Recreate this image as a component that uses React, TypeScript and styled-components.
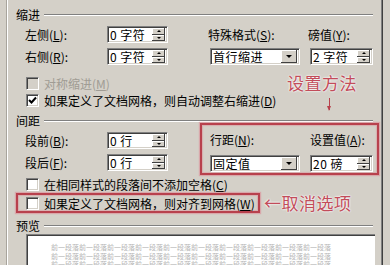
import React from 'react';
import styled, { createGlobalStyle } from 'styled-components';

const Global = createGlobalStyle`
html, body {
  margin: 0;
  padding: 0;
  background: #d4d0c8;
}
body {
  font-family: 'Noto Sans CJK SC', 'DejaVu Sans', sans-serif;
  font-size: 12px;
  color: #000;
}
`

const Page = styled.div`
width: 390px;
height: 265px;
background: #d4d0c8;
overflow: hidden;
position: relative;
`

const Pane = styled.div`
margin-left: 7px;
height: 265px;
border-left: 1px solid #ffffff;
border-right: 1px solid #808080;
box-shadow: -1px 0 0 #a8a49c, 1px 0 0 #404040;
padding: 0 8px;
box-sizing: content-box;
display: flex;
flex-direction: column;
width: 357px;
`

const GroupHead = styled.div<{ $top: number }>`
display: flex;
align-items: center;
height: 13px;
margin-top: ${p => p.$top}px;
line-height: 13px;
span {
  padding-right: 4px;
}
&::after {
  content: '';
  flex: 1;
  height: 0;
  border-top: 1px solid #808080;
  border-bottom: 1px solid #ffffff;
}
`

const IndentGrid = styled.div`
display: grid;
grid-template-columns: 82px 61px 42px 90px 10px 63px;
grid-template-rows: 17px 17px;
row-gap: 5px;
margin-top: 5px;
padding-left: 9px;
align-items: center;
`

const Label = styled.div`
white-space: nowrap;
line-height: 14px;
`

const RightLabel = styled(Label)<{ $col: number }>`
grid-column: ${p => p.$col} / span 2;
margin-left: -2px;
`

const Sunken = styled.div<{ $w: number }>`
width: ${p => p.$w}px;
height: 17px;
box-sizing: border-box;
background: #fff;
border-top: 1px solid #808080;
border-left: 1px solid #808080;
border-bottom: 1px solid #ffffff;
border-right: 1px solid #ffffff;
box-shadow: inset 1px 1px 0 #404040, inset -1px -1px 0 #d4d0c8;
display: flex;
align-items: center;
padding: 2px;
`

const FieldText = styled.div`
flex: 1;
line-height: 13px;
white-space: nowrap;
letter-spacing: 0.5px;
`

const SpinCol = styled.div`
display: flex;
flex-direction: column;
width: 13px;
height: 13px;
`

const RaisedBtn = styled.div`
flex: 1;
background: #d4d0c8;
box-shadow: inset -1px -1px 0 #404040, inset 1px 1px 0 #ffffff;
display: flex;
align-items: center;
justify-content: center;
`

const Tri = styled.div<{ $up?: boolean; $size?: number }>`
width: 0;
height: 0;
border-left: ${p => p.$size || 2}px solid transparent;
border-right: ${p => p.$size || 2}px solid transparent;
${p => p.$up
    ? `border-bottom: ${p.$size || 2}px solid #000;`
    : `border-top: ${p.$size || 2}px solid #000;`}
`

const DropBtn = styled(RaisedBtn)`
flex: none;
width: 16px;
height: 13px;
`

const CheckRow = styled.div<{ $top: number; $disabled?: boolean }>`
display: flex;
align-items: center;
height: 13px;
margin-top: ${p => p.$top}px;
padding-left: 10px;
gap: 5px;
white-space: nowrap;
color: ${p => p.$disabled ? '#a09c94' : '#000'};
`

const Box = styled.div<{ $disabled?: boolean }>`
width: 13px;
height: 13px;
box-sizing: border-box;
background: ${p => p.$disabled ? '#d4d0c8' : '#fff'};
border-top: 1px solid #808080;
border-left: 1px solid #808080;
border-bottom: 1px solid #ffffff;
border-right: 1px solid #ffffff;
box-shadow: inset 1px 1px 0 #404040, inset -1px -1px 0 #d4d0c8;
display: flex;
align-items: center;
justify-content: center;
flex: none;
`

const SpacingRow = styled.div`
display: flex;
`

const SpacingLeft = styled.div`
display: grid;
grid-template-columns: 82px 61px;
grid-template-rows: 15px 15px;
row-gap: 7px;
margin-top: 6px;
padding-left: 9px;
align-items: center;
width: 175px;
`

const RedBox = styled.div`
margin-top: -4px;
margin-right: -6px;
width: 179px;
height: 52px;
box-sizing: border-box;
border: 2px solid #b8414d;
box-shadow: 0 0 1px 1px rgba(220, 140, 150, 0.6), inset 0 0 1px 1px rgba(220, 140, 150, 0.5);
display: grid;
grid-template-columns: 90px 10px 63px;
grid-template-rows: 14px 17px;
row-gap: 8px;
padding: 8px 0 0 8px;
`

const AnnotRow = styled.div`
display: flex;
align-items: center;
margin-top: 2px;
`

const RedBox2 = styled.div`
width: 244px;
height: 20px;
box-sizing: border-box;
border: 2px solid #b8414d;
box-shadow: 0 0 1px 1px rgba(220, 140, 150, 0.6), inset 0 0 1px 1px rgba(220, 140, 150, 0.5);
display: flex;
align-items: center;
padding-left: 8px;
gap: 5px;
white-space: nowrap;
`

const Note = styled.div`
color: #c24c5a;
font-size: 17px;
line-height: 18px;
white-space: nowrap;
letter-spacing: 0.5px;
text-shadow: 0 0 2px #fff, 0 0 2px #fff;
`

const SideNote = styled(Note)`
margin-left: 4px;
`

const TopNote = styled.div`
position: absolute;
left: 287px;
top: 74px;
display: flex;
flex-direction: column;
align-items: center;
`

const DownArrow = styled.div`
margin-top: 6px;
margin-left: 14px;
width: 1px;
height: 12px;
background: #b8414d;
position: relative;
&::after {
  content: '';
  position: absolute;
  left: -2px;
  bottom: -1px;
  border-left: 2.5px solid transparent;
  border-right: 2.5px solid transparent;
  border-top: 5px solid #b8414d;
}
`

const Preview = styled.div`
margin-top: 2px;
margin-left: 10px;
width: 349px;
flex: 1;
background: #fff;
border-top: 1px solid #808080;
border-left: 1px solid #808080;
box-shadow: inset 1px 1px 0 #404040;
padding: 8px 0 0 24px;
box-sizing: border-box;
overflow: hidden;
`

const PreviewLine = styled.div`
font-size: 7px;
line-height: 8.5px;
color: #b4b4b4;
white-space: nowrap;
`

const Key = ({ k }: { k: string }) => (
    <span>(<u>{k}</u>)</span>
)

const Spin = ({ w, value }: { w: number; value: string }) => (
    <Sunken $w={w}>
        <FieldText>{value}</FieldText>
        <SpinCol>
            <RaisedBtn><Tri $up /></RaisedBtn>
            <RaisedBtn><Tri /></RaisedBtn>
        </SpinCol>
    </Sunken>
)

const Drop = ({ value }: { value: string }) => (
    <Sunken $w={90}>
        <FieldText>{value}</FieldText>
        <DropBtn><Tri $size={3} /></DropBtn>
    </Sunken>
)

const Check = () => (
    <svg width="9" height="9" viewBox="0 0 9 9">
        <path d="M1 4 L3.5 6.5 L8 1.5" stroke="#000" strokeWidth="2" fill="none" />
    </svg>
)

const prevText = '前一段落'.repeat(10)

export default function App() {
    return (
        <Page>
            <Global />
            <Pane>
                <GroupHead $top={8}><span>缩进</span></GroupHead>
                <IndentGrid>
                    <Label>左侧<Key k="L" />:</Label>
                    <Spin w={61} value="0 字符" />
                    <div />
                    <RightLabel $col={4}>特殊格式<Key k="S" />:</RightLabel>
                    <RightLabel $col={6}>磅值<Key k="Y" />:</RightLabel>
                    <Label>右侧<Key k="R" />:</Label>
                    <Spin w={61} value="0 字符" />
                    <div />
                    <Drop value="首行缩进" />
                    <div />
                    <Spin w={63} value="2 字符" />
                </IndentGrid>

                <CheckRow $top={12} $disabled>
                    <Box $disabled />
                    <span>对称缩进<Key k="M" /></span>
                </CheckRow>
                <CheckRow $top={4}>
                    <Box><Check /></Box>
                    <span>如果定义了文档网格，则自动调整右缩进<Key k="D" /></span>
                </CheckRow>

                <GroupHead $top={7}><span>间距</span></GroupHead>
                <SpacingRow>
                    <SpacingLeft>
                        <Label>段前<Key k="B" />:</Label>
                        <Spin w={61} value="0 行" />
                        <Label>段后<Key k="F" />:</Label>
                        <Spin w={61} value="0 行" />
                    </SpacingLeft>
                    <RedBox>
                        <Label>行距<Key k="N" />:</Label>
                        <div />
                        <Label>设置值<Key k="A" />:</Label>
                        <Drop value="固定值" />
                        <div />
                        <Spin w={63} value="20 磅" />
                    </RedBox>
                </SpacingRow>

                <CheckRow $top={3}>
                    <Box />
                    <span>在相同样式的段落间不添加空格<Key k="C" /></span>
                </CheckRow>
                <AnnotRow>
                    <RedBox2>
                        <Box />
                        <span>如果定义了文档网格，则对齐到网格<Key k="W" /></span>
                    </RedBox2>
                    <SideNote>←取消选项</SideNote>
                </AnnotRow>

                <GroupHead $top={6}><span>预览</span></GroupHead>
                <Preview>
                    <PreviewLine>{prevText}</PreviewLine>
                    <PreviewLine>{prevText}</PreviewLine>
                    <PreviewLine>{prevText}</PreviewLine>
                </Preview>
            </Pane>
            <TopNote>
                <Note>设置方法</Note>
                <DownArrow />
            </TopNote>
        </Page>
    );
}
